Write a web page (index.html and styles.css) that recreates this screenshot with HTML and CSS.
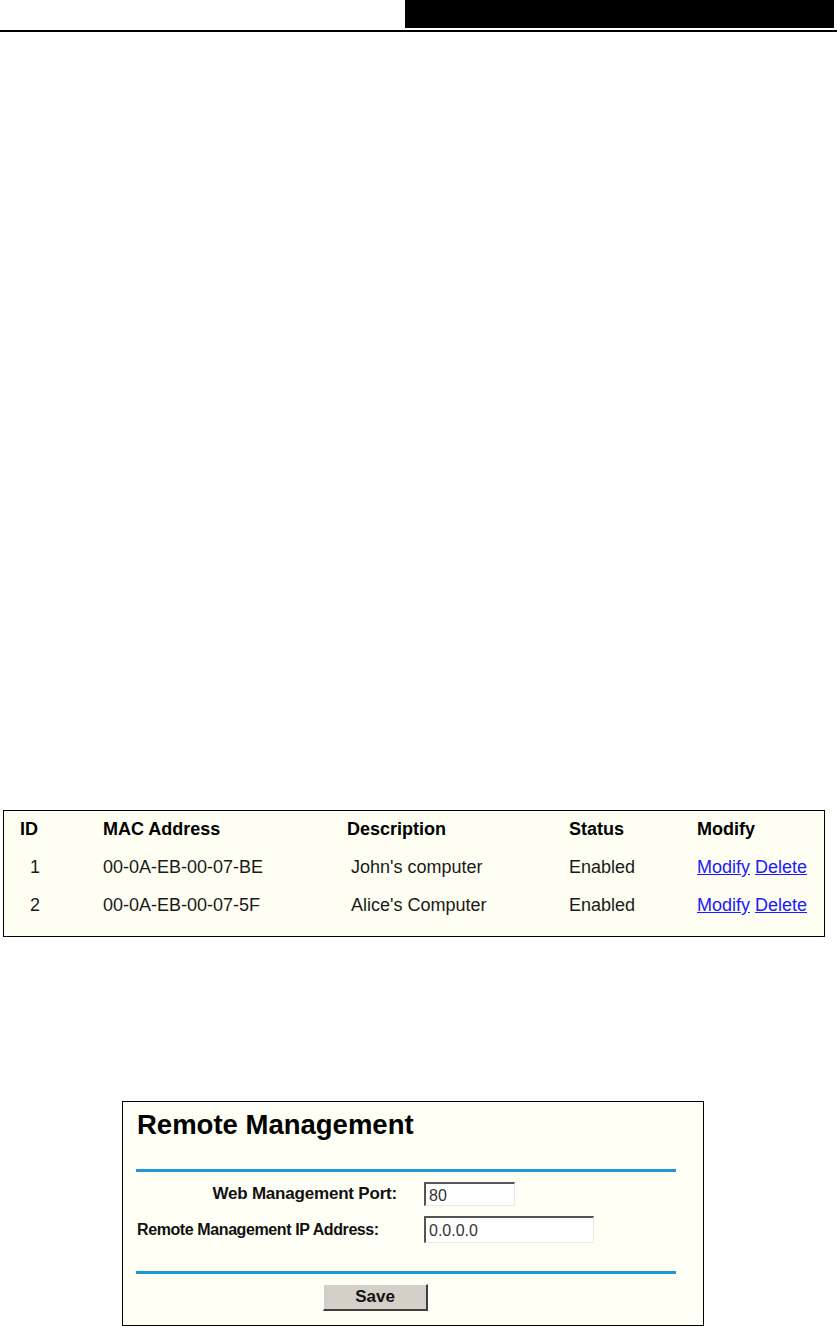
FILE: index.html
```html
<!DOCTYPE html>
<html lang="en">
<head>
<meta charset="UTF-8">
<title>MAC Address Cloning and Remote Management</title>
<link rel="stylesheet" href="styles.css">
</head>
<body>
<div class="pagehead">
	<div class="headbar"></div>
</div>

<div class="spacer-top"></div>

<div class="mactable">
	<div class="row head">
		<div class="c1">ID</div>
		<div class="c2">MAC Address</div>
		<div class="c3">Description</div>
		<div class="c4">Status</div>
		<div class="c5">Modify</div>
	</div>
	<div class="row">
		<div class="c1 num">1</div>
		<div class="c2">00-0A-EB-00-07-BE</div>
		<div class="c3 desc">John's computer</div>
		<div class="c4">Enabled</div>
		<div class="c5"><a href="#">Modify</a> <a href="#">Delete</a></div>
	</div>
	<div class="row">
		<div class="c1 num">2</div>
		<div class="c2">00-0A-EB-00-07-5F</div>
		<div class="c3 desc">Alice's Computer</div>
		<div class="c4">Enabled</div>
		<div class="c5"><a href="#">Modify</a> <a href="#">Delete</a></div>
	</div>
</div>

<div class="spacer-mid"></div>

<div class="remote">
	<div class="title">Remote Management</div>
	<div class="blueline"></div>
	<div class="field">
		<label class="lbl right" for="port">Web Management Port:</label>
		<input type="text" id="port" class="txt short" value="80">
	</div>
	<div class="field">
		<label class="lbl small" for="ip">Remote Management IP Address:</label>
		<input type="text" id="ip" class="txt long" value="0.0.0.0">
	</div>
	<div class="blueline second"></div>
	<div class="buttons"><button type="button" class="btn">Save</button></div>
</div>
</body>
</html>
```

FILE: styles.css
```css
html, body
{	margin:0;
	padding:0;
	background:#ffffff;
	font-family:"Liberation Sans", Arial, sans-serif;
}
.pagehead
{	height:30px;
	border-bottom:2px solid #000000;
	display:flex;
	justify-content:flex-end;
	padding-right:3px;
}
.headbar
{	width:429px;
	height:28px;
	background:#000000;
}
.spacer-top
{	height:778px;
}
/* ---- MAC table ---- */
.mactable
{	margin-left:3px;
	width:822px;
	height:127px;
	border:1px solid #000000;
	background:#fefef2;
	padding-top:7px;
	box-sizing:border-box;
	font-size:18px;
	color:#1a1a1a;
}
.row
{	display:grid;
	grid-template-columns:99px 244px 222px 128px auto;
	height:38px;
	line-height:22px;
}
.row.head
{	font-weight:bold;
	color:#000000;
}
.head .c1
{	padding-left:16px;
}
.num
{	padding-left:26px;
}
.desc
{	padding-left:4px;
}
.c5 a
{	color:#1a1aff;
}
.spacer-mid
{	height:164px;
}
/* ---- Remote management ---- */
.remote
{	margin-left:122px;
	width:582px;
	height:225px;
	border:1px solid #000000;
	background:#fffff5;
	box-sizing:border-box;
	padding:7px 0 0 13px;
}
.title
{	font-size:27.5px;
	font-weight:bold;
	line-height:32px;
	padding-left:1px;
	color:#000000;
}
.blueline
{	margin-top:28px;
	width:540px;
	height:3px;
	background:#1a9ad6;
}
.blueline.second
{	margin-top:28px;
}
.field
{	display:flex;
	align-items:center;
	margin-top:10px;
}
.field + .field
{	margin-top:10px;
}
.lbl
{	width:264px;
	font-size:17px;
	font-weight:bold;
	letter-spacing:-0.2px;
	color:#111111;
	padding-left:1px;
	box-sizing:border-box;
}
.lbl.right
{	text-align:right;
	padding-right:3px;
}
.lbl.small
{	font-size:16px;
	letter-spacing:-0.4px;
}
.txt
{	margin-left:24px;
	height:24px;
	box-sizing:border-box;
	border-style:solid;
	border-width:2px 1px 1px 2px;
	border-color:#555555 #e8e8e8 #e8e8e8 #555555;
	background:#ffffff;
	font-family:"Liberation Sans", Arial, sans-serif;
	font-size:16px;
	color:#333333;
	padding:2px 3px 0 3px;
}
.txt.short
{	width:91px;
}
.txt.long
{	width:170px;
	height:27px;
}
.buttons
{	margin-top:10px;
	padding-left:187px;
}
.btn
{	width:105px;
	height:27px;
	background:#d4d0c8;
	border-style:solid;
	border-width:1px 2px 2px 1px;
	border-color:#ffffff #404040 #404040 #ffffff;
	font-family:"Liberation Sans", Arial, sans-serif;
	font-size:17px;
	font-weight:bold;
	color:#111111;
	padding:0;
}
```
